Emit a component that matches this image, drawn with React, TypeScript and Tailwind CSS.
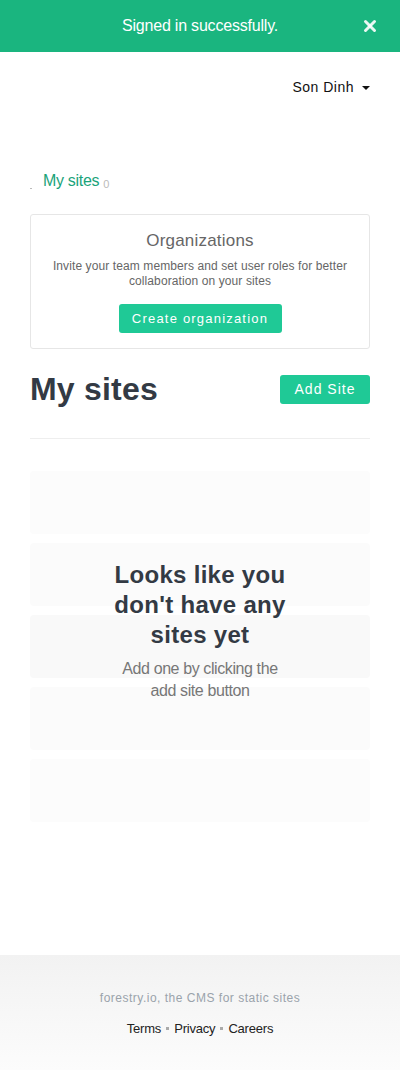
import { X } from "lucide-react";

const rows = ["bg-[#fcfcfc]", "bg-[#fbfbfb]", "bg-[#f9f9f9]", "bg-[#fbfbfb]", "bg-[#fcfcfc]"];

function Banner() {
  return (
    <div className="relative h-[52px] bg-[#1ab57f] flex items-center justify-center">
      <span className="text-[16px] text-white tracking-[-0.2px]">Signed in successfully.</span>
      <button className="absolute right-[21px] top-[17px] text-white/90">
        <X size={18} strokeWidth={4} />
      </button>
    </div>
  );
}

function EmptyState() {
  return (
    <div className="relative flex flex-col gap-[9px]">
      {rows.map((bg, i) => (
        <div key={i} className={`h-[63px] rounded ${bg}`} />
      ))}
      <div className="absolute inset-x-0 top-[89px] flex flex-col items-center text-center">
        <h2 className="w-[190px] text-[24px] leading-[30px] font-bold text-[#333a44] tracking-[0.3px]">
          Looks like you don't have any sites yet
        </h2>
        <p className="mt-[8px] w-[180px] text-[16px] leading-[22px] text-[#777] tracking-[-0.4px]">
          Add one by clicking the add site button
        </p>
      </div>
    </div>
  );
}

function Footer() {
  return (
    <footer className="h-[115px] bg-gradient-to-b from-[#f2f2f2] to-[#fcfcfc] flex flex-col items-center pt-[34px]">
      <p className="text-[12px] text-[#9aa3ab] tracking-[0.5px]">forestry.io, the CMS for static sites</p>
      <div className="mt-[12px] flex items-center gap-[5px] text-[13px] text-[#222] tracking-[-0.2px]">
        <a>Terms</a>
        <span className="w-[3px] h-[3px] bg-[#aaa]" />
        <a>Privacy</a>
        <span className="w-[3px] h-[3px] bg-[#aaa]" />
        <a>Careers</a>
      </div>
    </footer>
  );
}

export default function App() {
  return (
    <div className="w-[400px] min-h-[1070px] flex flex-col bg-white font-['Liberation_Sans',Arial,sans-serif]">
      <Banner />
      <div className="flex-1 px-[30px]">
        <div className="h-[70px] flex items-center justify-end">
          <button className="flex items-center gap-[8px] text-[14px] text-[#111] tracking-[0.5px]">
            Son Dinh
            <span className="w-0 h-0 border-x-[4px] border-x-transparent border-t-[4px] border-t-[#111] mt-[2px]" />
          </button>
        </div>

        <div className="mt-[51px] flex items-end gap-[4px] h-[20px]">
          <span className="w-[2px] h-[1px] bg-[#bbb] mb-[4px] mr-[7px]" />
          <span className="text-[16px] text-[#1aa37a] tracking-[-0.3px]">My sites</span>
          <span className="text-[11px] text-[#bbb] mb-[1px]">0</span>
        </div>

        <div className="mt-[21px] h-[135px] border border-[#e6e6e6] rounded-[3px] flex flex-col items-center pt-[16px]">
          <h3 className="text-[17px] text-[#666] tracking-[0.2px] leading-[20px]">Organizations</h3>
          <p className="mt-[8px] text-[12px] leading-[15px] text-[#666] text-center tracking-[0.1px] px-[10px]">
            Invite your team members and set user roles for better collaboration on your sites
          </p>
          <button className="mt-[15px] w-[163px] h-[29px] rounded-[3px] bg-[#1fc996] text-white text-[13px] tracking-[1.2px]">
            Create organization
          </button>
        </div>

        <div className="mt-[20px] flex items-center justify-between">
          <h1 className="text-[32px] font-bold text-[#333a44] leading-[40px] tracking-[0.2px]">My sites</h1>
          <button className="w-[90px] h-[29px] rounded-[3px] bg-[#1fc996] text-white text-[14px] tracking-[1px]">
            Add Site
          </button>
        </div>

        <hr className="mt-[29px] border-0 border-t border-[#eeeeee]" />

        <div className="mt-[32px]">
          <EmptyState />
        </div>
      </div>
      <Footer />
    </div>
  );
}
